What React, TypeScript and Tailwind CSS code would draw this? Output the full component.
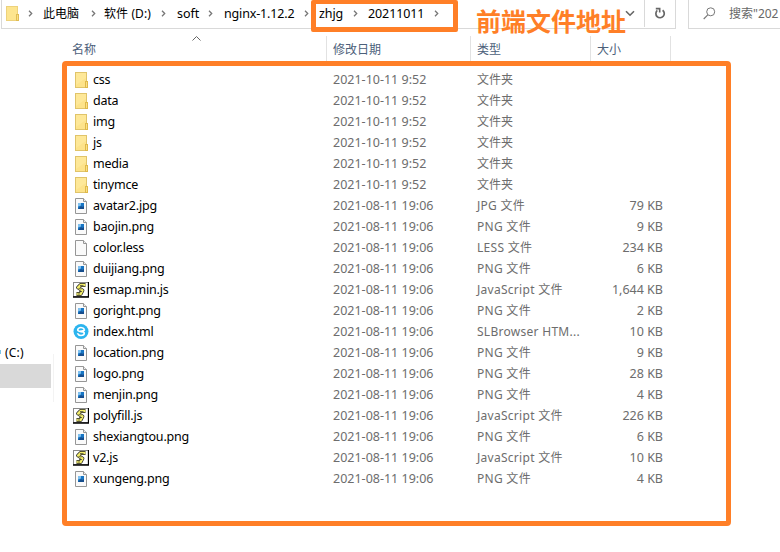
import React from "react";

type Kind = "folder" | "image" | "blank" | "script" | "browser";
type Entry = { name: string; kind: Kind; date: string; type: string; size?: string };

const OLD = "2021-08-11 19:06";
const NEW = "2021-10-11 9:52";

const entries: Entry[] = [
  { name: "css", kind: "folder", date: NEW, type: "文件夹" },
  { name: "data", kind: "folder", date: NEW, type: "文件夹" },
  { name: "img", kind: "folder", date: NEW, type: "文件夹" },
  { name: "js", kind: "folder", date: NEW, type: "文件夹" },
  { name: "media", kind: "folder", date: NEW, type: "文件夹" },
  { name: "tinymce", kind: "folder", date: NEW, type: "文件夹" },
  { name: "avatar2.jpg", kind: "image", date: OLD, type: "JPG 文件", size: "79 KB" },
  { name: "baojin.png", kind: "image", date: OLD, type: "PNG 文件", size: "9 KB" },
  { name: "color.less", kind: "blank", date: OLD, type: "LESS 文件", size: "234 KB" },
  { name: "duijiang.png", kind: "image", date: OLD, type: "PNG 文件", size: "6 KB" },
  { name: "esmap.min.js", kind: "script", date: OLD, type: "JavaScript 文件", size: "1,644 KB" },
  { name: "goright.png", kind: "image", date: OLD, type: "PNG 文件", size: "2 KB" },
  { name: "index.html", kind: "browser", date: OLD, type: "SLBrowser HTM...", size: "10 KB" },
  { name: "location.png", kind: "image", date: OLD, type: "PNG 文件", size: "9 KB" },
  { name: "logo.png", kind: "image", date: OLD, type: "PNG 文件", size: "28 KB" },
  { name: "menjin.png", kind: "image", date: OLD, type: "PNG 文件", size: "4 KB" },
  { name: "polyfill.js", kind: "script", date: OLD, type: "JavaScript 文件", size: "226 KB" },
  { name: "shexiangtou.png", kind: "image", date: OLD, type: "PNG 文件", size: "6 KB" },
  { name: "v2.js", kind: "script", date: OLD, type: "JavaScript 文件", size: "10 KB" },
  { name: "xungeng.png", kind: "image", date: OLD, type: "PNG 文件", size: "4 KB" },
];

function FileIcon({ kind }: { kind: Kind }) {
  if (kind === "folder")
    return (
      <svg width="16" height="17" viewBox="0 0 16 17" className="block">
        <rect x="2.5" y="1.5" width="11" height="15" fill="#fde38a" stroke="#e0c46a" />
        <path d="M3 2h10v5L3 14z" fill="#fff0ad" opacity=".4" />
        <rect x="12.5" y="10.5" width="2" height="6" fill="#fbe084" stroke="#dfb94a" />
      </svg>
    );
  if (kind === "script")
    return (
      <svg width="16" height="17" viewBox="0 0 16 17" className="block">
        <rect x=".5" y="1.5" width="15" height="14" fill="#fff" stroke="#8a8a8a" />
        <path d="M0 16h15.5V1" fill="none" stroke="#000" strokeWidth="1.3" />
        <path d="M12.5 4H7.5L5 6.5l4.5 3-1.8 3.5H3.5" fill="none" stroke="#222" strokeWidth="3.8" strokeLinejoin="round" />
        <path d="M12.5 4H7.5L5 6.5l4.5 3-1.8 3.5H3.5" fill="none" stroke="#f4ee6a" strokeWidth="2.3" strokeLinejoin="round" />
        <path d="M7 4.5h3.5M5.5 7.5l3 .5M6 10.5h3M4.5 13H7" stroke="#333" strokeWidth=".7" />
      </svg>
    );
  if (kind === "browser")
    return (
      <svg width="16" height="17" viewBox="0 0 16 17" className="block">
        <circle cx="8" cy="8.5" r="7.5" fill="#2bb4ee" />
        <path d="M11.6 6.7C10.8 5 9.5 4.5 8 4.5c-2 0-3.3 1.2-3.3 2.6 0 2.3 6.6.7 6.6 3 0 1.5-1.5 2.4-3.3 2.4-1.5 0-2.9-.6-3.6-2.2M7 8.3c2-.2 4.3-.4 4.6-1.6" fill="none" stroke="#fff" strokeWidth="1.6" />
      </svg>
    );
  return (
    <svg width="16" height="17" viewBox="0 0 16 17" className="block">
      <path d="M2.5 1.5h8l3 3v12h-11z" fill="#fafafa" stroke="#969696" />
      <path d="M10.5 1.5v3h3" fill="#eee" stroke="#969696" />
      {kind === "image" && (
        <>
          <rect x="5" y="6" width="6" height="6" fill="#1976c4" />
          <path d="M5 6h3v2.5L5 9.5z" fill="#7fc0ee" />
          <path d="M5 12L8 9l1.5 1L11 9v3z" fill="#174d8c" />
        </>
      )}
    </svg>
  );
}

function Crumb() {
  return (
    <svg width="5" height="7" viewBox="0 0 5 7" className="shrink-0">
      <path d="M1 .8l2.7 2.7L1 6.2" fill="none" stroke="#777" strokeWidth="1.3" />
    </svg>
  );
}

function AddressBar() {
  return (
    <div className="ml-px flex h-[29px] w-[675px] border-b border-l border-r border-[#d9d9d9] text-black">
      <div className="flex h-[27px] flex-1 items-center text-[12.5px]">
        <svg width="14" height="17" viewBox="0 0 14 17" className="ml-1 shrink-0">
          <rect x=".5" y="1.5" width="11" height="14" fill="#fde58f" stroke="#edd27c" />
          <rect x="10.5" y="9.5" width="2" height="6" fill="#fbe084" stroke="#e0bd55" />
        </svg>
        <div className="ml-[8px] flex w-[15px] shrink-0 items-center"><Crumb /></div>
        <div className="flex w-[48px] shrink-0 text-[12px]">此电脑</div>
        <div className="flex w-[13px] shrink-0"><Crumb /></div>
        <div className="w-[57px] shrink-0 whitespace-nowrap text-[12px] tracking-[0.1px]">软件 (D:)</div>
        <div className="flex w-[16px] shrink-0"><Crumb /></div>
        <div className="w-[31px] shrink-0">soft</div>
        <div className="flex w-[16px] shrink-0"><Crumb /></div>
        <div className="w-[80px] shrink-0 tracking-[-0.15px]">nginx-1.12.2</div>
        <div className="flex w-[15px] shrink-0"><Crumb /></div>
        <div className="w-[34px] shrink-0 tracking-[-0.1px]">zhjg</div>
        <div className="flex w-[15px] shrink-0"><Crumb /></div>
        <div className="w-[66px] shrink-0 tracking-[-0.1px]">20211011</div>
        <Crumb />
        <svg width="10" height="7" viewBox="0 0 10 7" className="mr-[9px] ml-auto">
          <path d="M1 1.2l4 4 4-4" fill="none" stroke="#666" strokeWidth="1.6" />
        </svg>
      </div>
      <div className="flex h-[27px] w-[31px] items-center justify-center border-l border-[#d9d9d9]">
        <svg width="12" height="13" viewBox="0 0 12 13">
          <path d="M8.6 3.2A4.2 4.2 0 1 1 3.3 3.4" fill="none" stroke="#666" strokeWidth="1.7" />
          <path d="M1.8 1.6h3.9v4" fill="none" stroke="#666" strokeWidth="1.6" />
        </svg>
      </div>
    </div>
  );
}

export default function App() {
  return (
    <div className="relative h-[552px] w-[780px] overflow-hidden bg-white font-['Noto_Sans','Noto_Sans_CJK_SC',sans-serif] text-[12px] leading-[21px]">
      <div className="flex h-[29px]">
        <AddressBar />
        <div className="ml-3 flex h-[29px] flex-1 items-center border-b border-l border-[#d9d9d9] pb-[1px] text-[#686868]">
          <svg width="13" height="13" viewBox="0 0 13 13" className="ml-[14px] shrink-0">
            <circle cx="7.7" cy="4.8" r="4" fill="none" stroke="#777" />
            <path d="M4.8 7.8L.7 12" stroke="#777" strokeWidth="1.1" />
          </svg>
          <span className="ml-[13px] whitespace-nowrap">搜索"202</span>
        </div>
      </div>

      <div className="flex h-[523px]">
        <aside className="h-full w-[54px] shrink-0 pt-[311px]">
          <div className="flex h-6 items-center text-black">
            <span className="h-1 w-px bg-[#7cc5ea]" />
            <span className="ml-1 tracking-[0.2px]">(C:)</span>
          </div>
          <div className="h-6 w-[51px] bg-[#d9d9d9]" />
          <div className="-mt-[34px] ml-[53px] h-12 w-px bg-[#f3f3f3]" />
        </aside>

        <main className="flex-1">
          <div className="flex h-[33px] pt-[7px] text-[#4c607a]">
            <div className="flex w-[273px] border-r border-[#e2e2e2] pt-[3px]">
              <span className="ml-[18px]">名称</span>
              <svg width="9" height="5" viewBox="0 0 9 5" className="-mt-[3px] ml-[96px]">
                <path d="M.5 4.5l4-4 4 4" fill="none" stroke="#666" />
              </svg>
            </div>
            <div className="w-[144px] border-r border-[#e2e2e2] pt-[3px] pl-[6px]">修改日期</div>
            <div className="w-[120px] border-r border-[#e2e2e2] pt-[3px] pl-[6px]">类型</div>
            <div className="w-[80px] border-r border-[#e2e2e2] pt-[3px] pl-[6px]">大小</div>
          </div>
          <div className="pt-[7px] pl-[19px] text-[#6d6d6d]">
            {entries.map((e) => (
              <div key={e.name} className="flex h-[21px] items-center whitespace-nowrap">
                <FileIcon kind={e.kind} />
                <span className="ml-1 w-[240px] text-[12.5px] tracking-[-0.2px] text-black">{e.name}</span>
                <span className="w-[144px] text-[12.5px]">{e.date}</span>
                <span className={e.kind === "folder" ? "w-[116px]" : "w-[116px] tracking-[0.28px]"}>{e.type}</span>
                <span className="w-[70px] text-right text-[12.5px]">{e.size}</span>
              </div>
            ))}
          </div>
        </main>
      </div>

      <div className="absolute top-[61px] left-[62px] h-[465px] w-[669px] rounded-[4px] border-[5px] border-[#ff7f27]" />
      <div className="absolute top-0 left-[311px] h-[32px] w-[147px] rounded-[2px] border-[5px] border-t-[4px] border-[#ff7f27]" />
      <div className="absolute top-[3px] left-[476px] text-[25px] leading-[36px] font-bold whitespace-nowrap text-[#ff7f27]">前端文件地址</div>
    </div>
  );
}
